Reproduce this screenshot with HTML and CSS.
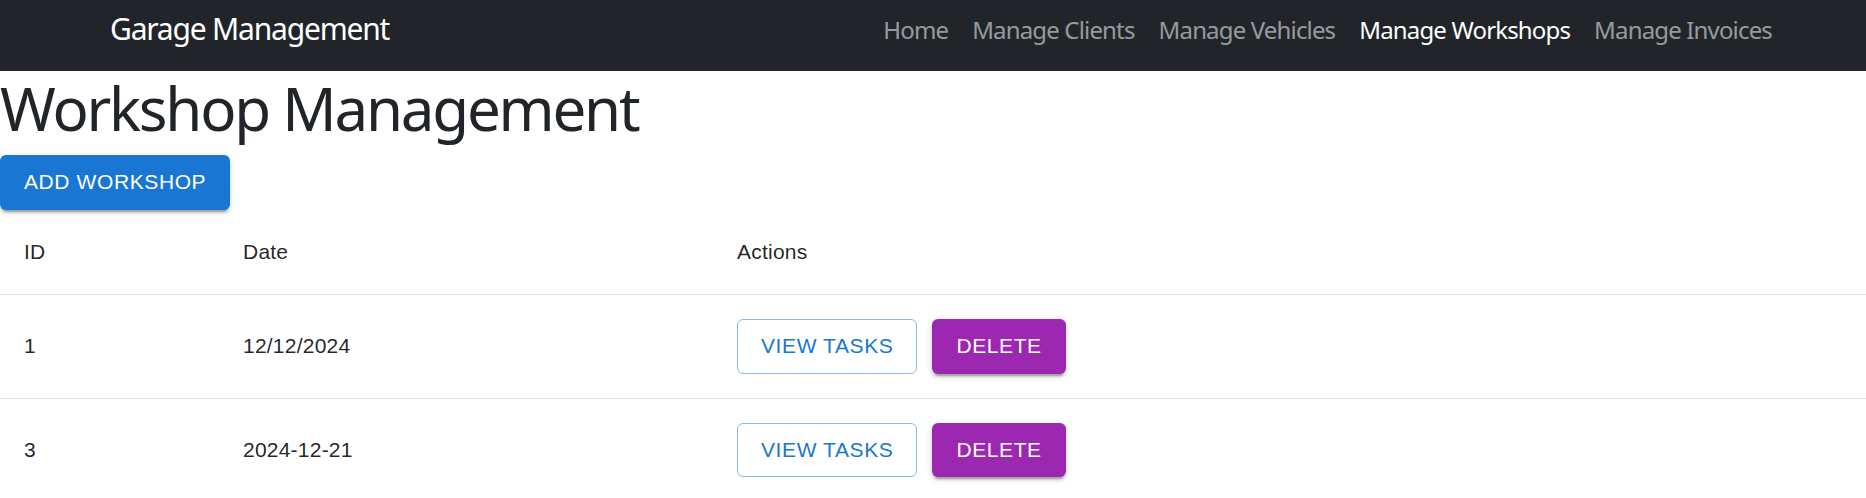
FILE: index.html
```html
<!DOCTYPE html>
<html lang="en">
<head>
<meta charset="utf-8">
<title>Garage Management</title>
<link rel="stylesheet" href="styles.css">
</head>
<body>
<nav class="navbar">
  <a class="brand" href="#">Garage Management</a>
  <ul class="nav-links">
    <li><a class="nav-link" href="#">Home</a></li>
    <li><a class="nav-link" href="#">Manage Clients</a></li>
    <li><a class="nav-link" href="#">Manage Vehicles</a></li>
    <li><a class="nav-link active" href="#">Manage Workshops</a></li>
    <li><a class="nav-link" href="#">Manage Invoices</a></li>
  </ul>
</nav>
<main class="page">
  <h1 class="title">Workshop Management</h1>
  <button class="btn btn-contained btn-primary">Add Workshop</button>
  <table class="data-table">
    <colgroup>
      <col class="col-id">
      <col class="col-date">
      <col class="col-actions">
    </colgroup>
    <thead>
      <tr>
        <th>ID</th>
        <th>Date</th>
        <th>Actions</th>
      </tr>
    </thead>
    <tbody>
      <tr>
        <td>1</td>
        <td>12/12/2024</td>
        <td>
          <div class="actions">
            <button class="btn btn-outlined">View Tasks</button>
            <button class="btn btn-contained btn-secondary">Delete</button>
          </div>
        </td>
      </tr>
      <tr>
        <td>3</td>
        <td>2024-12-21</td>
        <td>
          <div class="actions">
            <button class="btn btn-outlined">View Tasks</button>
            <button class="btn btn-contained btn-secondary">Delete</button>
          </div>
        </td>
      </tr>
    </tbody>
  </table>
</main>
</body>
</html>
```
FILE: styles.css
```css
* { box-sizing: border-box; }

html, body {
  margin: 0;
  padding: 0;
  background: #ffffff;
}

body {
  font-family: "Noto Sans", "Open Sans", sans-serif;
  color: #212529;
}

/* Navbar */
.navbar {
  display: flex;
  justify-content: space-between;
  align-items: flex-start;
  height: 71px;
  padding: 0 82px 0 110px;
  background: #212529;
}

.brand {
  display: block;
  padding-top: 14px;
  font-size: 30px;
  line-height: 30px;
  letter-spacing: -0.04em;
  color: #ffffff;
  text-decoration: none;
  white-space: nowrap;
}

.nav-links {
  display: flex;
  list-style: none;
  margin: 0;
  padding: 18px 0 0 0;
}

.nav-link {
  display: block;
  padding: 0 12px;
  font-size: 24px;
  line-height: 24px;
  letter-spacing: -0.035em;
  color: rgba(255, 255, 255, 0.55);
  text-decoration: none;
  white-space: nowrap;
}

.nav-link.active {
  color: #ffffff;
}

/* Page */
.page {
  padding: 0;
}

.title {
  margin: 0 0 12px 0;
  padding-top: 2px;
  font-size: 60px;
  line-height: 70px;
  font-weight: 400;
  letter-spacing: -0.037em;
  color: #212529;
}

/* Buttons (MUI-like, scaled 1.5x) */
.btn {
  display: inline-flex;
  align-items: center;
  justify-content: center;
  font-family: "Liberation Sans", Arial, sans-serif;
  font-size: 21px;
  font-weight: 400;
  line-height: 36.75px;
  letter-spacing: 0.6px;
  text-transform: uppercase;
  border-radius: 6px;
  cursor: pointer;
  white-space: nowrap;
}

.btn-contained {
  border: 0;
  padding: 9px 24px;
  color: #ffffff;
  box-shadow: 0 4.5px 1.5px -3px rgba(0, 0, 0, 0.2),
              0 3px 3px 0 rgba(0, 0, 0, 0.14),
              0 1.5px 7.5px 0 rgba(0, 0, 0, 0.12);
}

.btn-primary { background: #1976d2; }
.btn-secondary { background: #9c27b0; }

.btn-outlined {
  padding: 8px 23px;
  border: 1px solid rgba(25, 118, 210, 0.5);
  background: transparent;
  color: #1976d2;
}

/* Table */
.data-table {
  width: 100%;
  border-collapse: collapse;
  table-layout: fixed;
  font-family: "Liberation Sans", Arial, sans-serif;
  font-size: 21px;
  line-height: 36px;
  letter-spacing: 0.225px;
  color: rgba(0, 0, 0, 0.87);
}

.col-id { width: 219px; }
.col-date { width: 494px; }

.data-table th,
.data-table td {
  padding: 24px;
  text-align: left;
  vertical-align: middle;
  font-weight: 400;
  border-bottom: 1px solid #e0e0e0;
}

.actions {
  display: flex;
  align-items: center;
  gap: 15px;
}
```
